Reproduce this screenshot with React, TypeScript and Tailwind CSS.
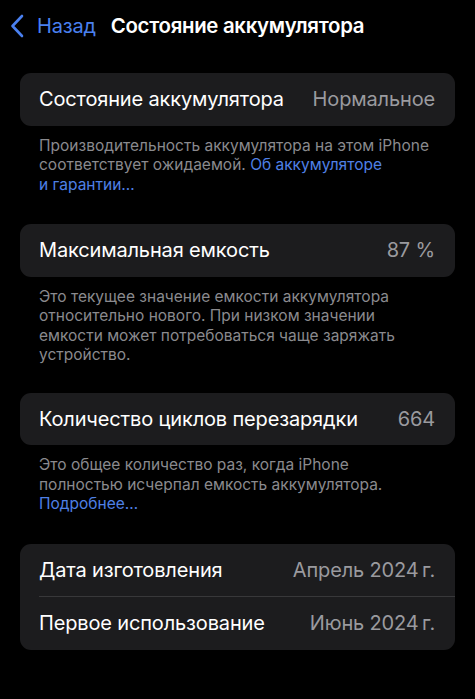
import { Fragment } from 'react'

type Row = { label: string; value: string }

const FONT = 'font-["Inter","Noto_Sans",sans-serif]'

function Card({ rows }: { rows: Row[] }) {
  return (
    <div className="rounded-[11px] bg-[#1c1c1e] overflow-hidden">
      {rows.map((r, i) => (
        <Fragment key={r.label}>
          {i > 0 && <div className="ml-[19px] h-px bg-[#38383a]" />}
          <div className="flex h-[52.5px] items-center justify-between pl-[19px] pr-[20px]">
            <span className="text-[20px] tracking-[-0.15px] text-white">{r.label}</span>
            <span className="text-[20px] tracking-[-0.15px] text-[#9a9a9f]">{r.value}</span>
          </div>
        </Fragment>
      ))}
    </div>
  )
}

function Note({ lines }: { lines: React.ReactNode[] }) {
  return (
    <div className="px-[19px] pt-[10px] text-[15.5px] leading-[19.5px] tracking-[0px] text-[#8a8a8e]">
      {lines.map((l, i) => (
        <div key={i} className="whitespace-nowrap">{l}</div>
      ))}
    </div>
  )
}

const Link = ({ children }: { children: React.ReactNode }) => (
  <span className="text-[#4f80e6]">{children}</span>
)

export default function App() {
  return (
    <div className={`${FONT} min-h-[699px] w-full bg-black px-5 antialiased`}>
      <header className="flex h-[52px] items-center -ml-[10px]">
        <svg width="14" height="24" viewBox="0 0 14 24" className="mr-[13px]" fill="none">
          <path d="M12 2 L2.5 12 L12 22" stroke="#4a80f0" strokeWidth="2.6" strokeLinecap="round" strokeLinejoin="round" />
        </svg>
        <span className="text-[20px] text-[#4a80f0] tracking-[-0.2px]">Назад</span>
        <span className="ml-[15px] text-[20.4px] font-semibold text-white tracking-[-0.3px]">Состояние аккумулятора</span>
      </header>

      <div className="mt-[21px]">
        <Card rows={[{ label: 'Состояние аккумулятора', value: 'Нормальное' }]} />
        <Note
          lines={[
            'Производительность аккумулятора на этом iPhone',
            <>соответствует ожидаемой. <Link>Об аккумуляторе</Link></>,
            <Link>и гарантии…</Link>,
          ]}
        />
      </div>

      <div className="mt-[30px]">
        <Card rows={[{ label: 'Максимальная емкость', value: '87 %' }]} />
        <Note
          lines={[
            'Это текущее значение емкости аккумулятора',
            'относительно нового. При низком значении',
            'емкости может потребоваться чаще заряжать',
            'устройство.',
          ]}
        />
      </div>

      <div className="mt-[28px]">
        <Card rows={[{ label: 'Количество циклов перезарядки', value: '664' }]} />
        <Note
          lines={[
            'Это общее количество раз, когда iPhone',
            'полностью исчерпал емкость аккумулятора.',
            <Link>Подробнее…</Link>,
          ]}
        />
      </div>

      <div className="mt-[30px]">
        <Card
          rows={[
            { label: 'Дата изготовления', value: 'Апрель 2024\u2009г.' },
            { label: 'Первое использование', value: 'Июнь 2024\u2009г.' },
          ]}
        />
      </div>
    </div>
  )
}
